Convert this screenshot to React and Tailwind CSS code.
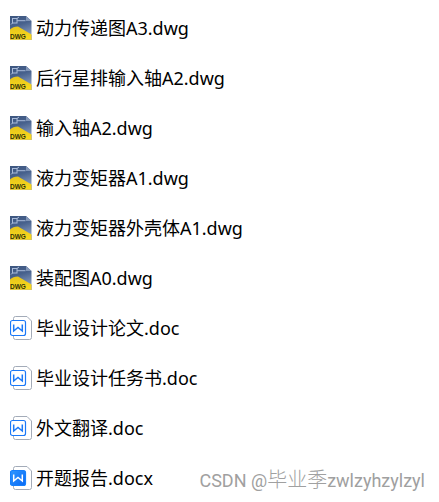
const files = [
  { name: "动力传递图A3.dwg", kind: "dwg" },
  { name: "后行星排输入轴A2.dwg", kind: "dwg" },
  { name: "输入轴A2.dwg", kind: "dwg" },
  { name: "液力变矩器A1.dwg", kind: "dwg" },
  { name: "液力变矩器外壳体A1.dwg", kind: "dwg" },
  { name: "装配图A0.dwg", kind: "dwg" },
  { name: "毕业设计论文.doc", kind: "doc" },
  { name: "毕业设计任务书.doc", kind: "doc" },
  { name: "外文翻译.doc", kind: "doc" },
  { name: "开题报告.docx", kind: "docx" },
];

function DwgIcon() {
  return (
    <svg className="h-6 w-[22px] shrink-0" viewBox="0 0 22 24" aria-hidden="true">
      <defs>
        <linearGradient id="dwgBlue" x1="0" y1="0" x2="0.3" y2="1">
          <stop offset="0" stopColor="#3d567f" />
          <stop offset="0.45" stopColor="#47618d" />
          <stop offset="1" stopColor="#8ba0c2" />
        </linearGradient>
        <linearGradient id="dwgYellow" x1="0" y1="0" x2="0" y2="1">
          <stop offset="0" stopColor="#e6c41c" />
          <stop offset="1" stopColor="#fbdc1c" />
        </linearGradient>
      </defs>
      <path d="M0 0H16L21.500 5V24H0Z" fill="url(#dwgBlue)" />
      <path d="M0 13.500Q3 10.500 8 10.500L21.500 18.500V24H0Z" fill="url(#dwgYellow)" />
      <path d="M21.500 19V23.700H0" fill="none" stroke="#c8b77c" strokeWidth="0.6" />
      <path d="M16 0V5H21.500Z" fill="#8397b8" />
      <g fill="none" stroke="#a9bbd9" strokeWidth="1">
        <rect x="2.500" y="2.500" width="4.500" height="4.500" />
        <path d="M7 4.700H15.500M1 8.500L2.500 7M7 2.500L9 1" />
      </g>
      <text x="0" y="22.500" fontSize="6.500" fontWeight="700" fill="#30300c" className="font-['Liberation_Sans']">
        DWG
      </text>
    </svg>
  );
}

function DocIcon({ solid }) {
  return (
    <svg className="h-6 w-[22px] shrink-0" viewBox="0 0 22 24" fill="none" aria-hidden="true">
      <defs>
        <linearGradient id="docBlue" x1="0" y1="0" x2="1" y2="1">
          <stop offset="0" stopColor="#2f98ff" />
          <stop offset="1" stopColor="#0868f5" />
        </linearGradient>
      </defs>
      <path
        d="M5.500 0.500H17L21.500 5V21.500Q21.500 23.500 19.500 23.500H5.500Q3.500 23.500 3.500 21.500V2.500Q3.500 0.500 5.500 0.500Z"
        fill="#fff"
        stroke="#a3abb8"
      />
      <rect
        x="0.500"
        y="4.500"
        width="15"
        height="15"
        rx="2"
        fill={solid ? "url(#docBlue)" : "#fff"}
        stroke={solid ? "#1680fc" : "#1b79f8"}
        strokeWidth="1.200"
      />
      <path
        d="M3.700 8.500V15L8 11.500L12.300 15V8.500"
        stroke={solid ? "#fff" : "#1b79f8"}
        strokeWidth="1.500"
      />
    </svg>
  );
}

export default function App() {
  return (
    <main className="relative bg-white pt-[3px] pl-2.5 font-['Noto_Sans','Noto_Sans_CJK_SC',sans-serif] text-black">
      <ul>
        {files.map((file) => (
          <li key={file.name} className="flex h-[50px] items-center gap-1 text-lg whitespace-nowrap">
            {file.kind === "dwg" ? <DwgIcon /> : <DocIcon solid={file.kind === "docx"} />}
            <span>{file.name}</span>
          </li>
        ))}
      </ul>
      <p className="absolute right-3.5 bottom-2.5 font-['Roboto','Noto_Sans_CJK_SC',sans-serif] text-lg leading-6 whitespace-nowrap text-[#a0a0a0]">
        CSDN @<span className="text-xl leading-6 font-light">毕业季</span>zwlzyhzylzyl
      </p>
    </main>
  );
}
